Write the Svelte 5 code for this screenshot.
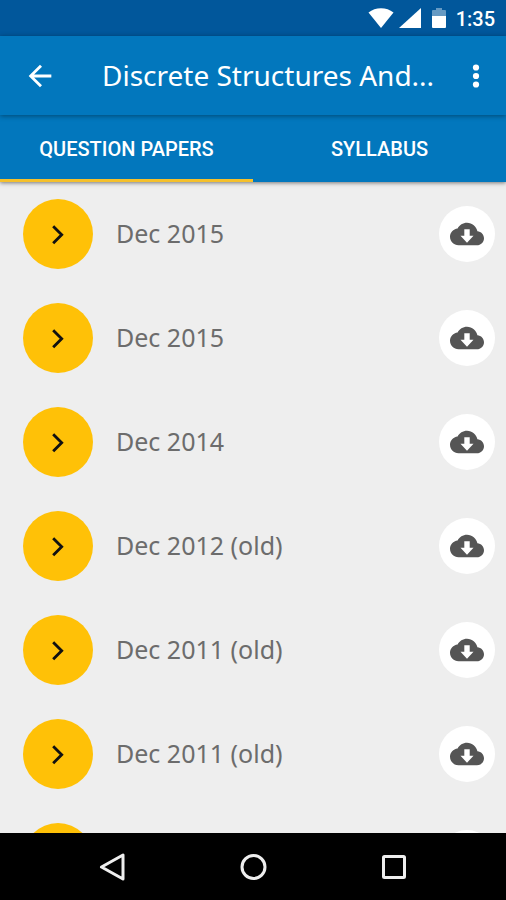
<script>
	let active = $state('papers');

	const tabs = [
		{ id: 'papers', name: 'Question Papers' },
		{ id: 'syllabus', name: 'Syllabus' }
	];

	// the last entry has no name yet, it only peeks in above the key bar
	const papers = [
		'Dec 2015',
		'Dec 2015',
		'Dec 2014',
		'Dec 2012 (old)',
		'Dec 2011 (old)',
		'Dec 2011 (old)',
		''
	];

	const backPath = 'M20 11H7.83l5.59-5.59L12 4l-8 8 8 8 1.41-1.41L7.83 13H20v-2z';
	const cloudPath =
		'M19.35 10.04C18.67 6.59 15.64 4 12 4 9.11 4 6.6 5.64 5.35 8.04 2.34 8.36 0 10.91 0 14c0 3.31 2.69 6 6 6h13c2.76 0 5-2.24 5-5 0-2.64-2.05-4.78-4.65-4.96zM16.6 13.3l-4.6 4.9-4.6-4.9h2.700V8.600h3.800v4.700z';
</script>

<div class="screen">
	<div class="status">
		<svg width="26" height="20" viewBox="0 0 26 20">
			<path d="M13 20L.5 4.500C4 1.700 8.300.2 13 .2s9 1.500 12.500 4.300z" />
		</svg>
		<svg class="signal" width="22" height="20" viewBox="0 0 22 20">
			<path d="M22 0v20H0z" />
		</svg>
		<svg class="battery" width="14" height="20" viewBox="0 0 14 20">
			<path opacity=".4" d="M4 0h6v2h3a1 1 0 0 1 1 1v5H0V3a1 1 0 0 1 1-1h3z" />
			<path d="M0 8h14v11a1 1 0 0 1-1 1H1a1 1 0 0 1-1-1z" />
		</svg>
		<span class="clock">1:35</span>
	</div>

	<header>
		<button class="icon" aria-label="Back">
			<svg width="34" height="34" viewBox="0 0 24 24"><path d={backPath} /></svg>
		</button>
		<h1>Discrete Structures And...</h1>
		<button class="icon" aria-label="More options">
			<svg width="34" height="34" viewBox="0 0 24 24">
				<circle cx="12" cy="6" r="2.200" />
				<circle cx="12" cy="12" r="2.200" />
				<circle cx="12" cy="18" r="2.200" />
			</svg>
		</button>
	</header>

	<nav class="tabs">
		{#each tabs as tab}
			<button class="tab" class:active={active === tab.id} onclick={() => (active = tab.id)}>
				{tab.name}
			</button>
		{/each}
	</nav>

	<ul class="papers">
		{#if active === 'papers'}
			{#each papers as name}
				<li>
					<button class="open" aria-label="Open {name}">
						<svg width="34" height="34" viewBox="0 0 24 24">
							<path d="M8.600 6.500L14.600 12.500l-6 6" />
						</svg>
					</button>
					<span class="name">{name}</span>
					<button class="download" aria-label="Download {name}">
						<svg width="34" height="34" viewBox="0 0 24 24"><path d={cloudPath} /></svg>
					</button>
				</li>
			{/each}
		{/if}
	</ul>

	<footer>
		<button class="key" aria-label="Back">
			<svg width="28" height="28" viewBox="0 0 28 28"><path d="M24 2v24L2.500 14z" /></svg>
		</button>
		<button class="key" aria-label="Home">
			<svg width="28" height="28" viewBox="0 0 28 28"><circle cx="14.500" cy="14" r="11.500" /></svg>
		</button>
		<button class="key" aria-label="Recent apps">
			<svg width="28" height="28" viewBox="0 0 28 28">
				<rect x="4.500" y="3.500" width="21" height="21" rx="1" />
			</svg>
		</button>
	</footer>
</div>

<style>
	:global(body) {
		margin: 0;
	}

	.screen {
		display: flex;
		flex-direction: column;
		height: 100vh;
		overflow: hidden;
		background: #eee;
		font-family: 'Noto Sans', 'Open Sans', sans-serif;
	}

	button {
		display: flex;
		align-items: center;
		justify-content: center;
		padding: 0;
		border: none;
		background: none;
		color: inherit;
		font: inherit;
		cursor: pointer;
	}

	svg {
		display: block;
		fill: currentColor;
	}

	.status {
		flex: none;
		display: flex;
		align-items: center;
		justify-content: flex-end;
		height: 36px;
		padding-right: 11px;
		background: #01579b;
		color: #fff;
	}

	.signal {
		margin-left: 5px;
	}

	.battery {
		margin: 0 10px 0 11px;
	}

	.clock {
		padding-top: 2px;
		font: 500 20px/34px Roboto, sans-serif;
	}

	header {
		z-index: 2;
		flex: none;
		display: flex;
		align-items: center;
		height: 79px;
		padding: 0 13px 0 23px;
		background: #0277bd;
		color: #fff;
		box-shadow: 0 1px 5px rgba(0, 0, 0, 0.4);
	}

	h1 {
		flex: 1;
		min-width: 0;
		margin: 0;
		padding: 0 0 2px 45px;
		overflow: hidden;
		font-size: 28px;
		font-weight: 400;
		line-height: 36px;
		white-space: nowrap;
	}

	.tabs {
		z-index: 1;
		flex: none;
		display: flex;
		height: 67px;
		background: #0277bd;
		color: #fff;
		box-shadow: 0 1px 4px rgba(0, 0, 0, 0.5);
	}

	.tab {
		box-sizing: border-box;
		flex: 1;
		border-top: 4px solid transparent;
		border-bottom: 3px solid transparent;
		font: 500 20px/24px Roboto, sans-serif;
		text-transform: uppercase;
	}

	.tab.active {
		border-bottom-color: #f5c02c;
	}

	.papers {
		flex: 1;
		min-height: 0;
		margin: 0;
		padding: 0;
		overflow: hidden;
		list-style: none;
	}

	li {
		display: flex;
		align-items: center;
		height: 104px;
		padding: 0 11px 0 23px;
	}

	.open {
		flex: none;
		width: 70px;
		height: 70px;
		border-radius: 50%;
		background: #ffc107;
		color: #111;
	}

	.open path {
		fill: none;
		stroke: currentColor;
		stroke-width: 2;
	}

	.name {
		flex: 1;
		padding: 0 0 2px 23px;
		color: #6c6c6c;
		font-size: 25px;
		line-height: 36px;
	}

	.download {
		flex: none;
		width: 56px;
		height: 56px;
		border-radius: 50%;
		background: #fff;
		color: #555;
	}

	footer {
		z-index: 1;
		flex: none;
		display: flex;
		justify-content: center;
		gap: 112px;
		height: 67px;
		background: #000;
		color: #eee;
	}

	.key path,
	.key circle,
	.key rect {
		fill: none;
		stroke: currentColor;
		stroke-width: 3;
		stroke-linejoin: round;
	}
</style>
